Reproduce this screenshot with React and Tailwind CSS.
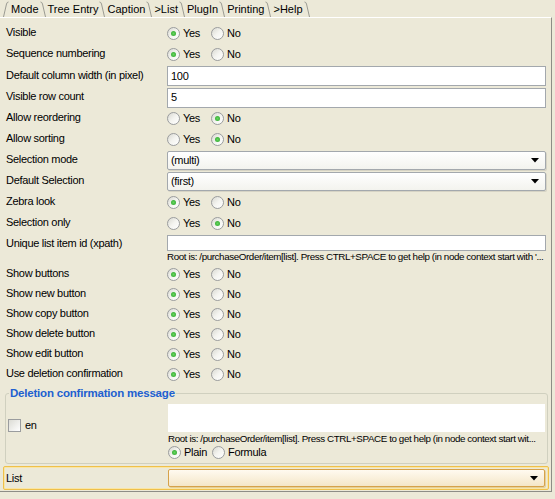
import { Fragment } from "react";

// tab separators, drawn as thin slanted lines
const TabEdge = ({ left }) => (
  <svg width="6" height="16" viewBox="0 0 6 16" className="shrink-0">
    {left ? (
      <path d="M0.5 16 L3.5 3 Q4 1 5.5 1" stroke="#9a9a92" fill="none" />
    ) : (
      <path d="M0.5 1 Q2 1 2.5 3 L5.5 16" stroke="#9a9a92" fill="none" />
    )}
  </svg>
);

const Radio = ({ checked, label }) => (
  <span className="flex items-center gap-[3px]">
    <span className="w-[13px] h-[13px] rounded-full border border-[#9a9c9e] bg-gradient-to-br from-[#d9d9d2] via-[#f4f4f0] to-white flex items-center justify-center">
      {checked && (
        <span className="w-[5px] h-[5px] rounded-full bg-[radial-gradient(circle,#66d65e_0%,#2aa12a_100%)]" />
      )}
    </span>
    <span>{label}</span>
  </span>
);

const YesNo = ({ yes }) => (
  <div className="flex items-center gap-[11px]">
    <Radio checked={yes} label="Yes" />
    <Radio checked={!yes} label="No" />
  </div>
);

const Arrow = () => (
  <svg width="8" height="5" viewBox="0 0 8 5" className="shrink-0">
    <path d="M0 0 H8 L4 4.5 Z" fill="#000" />
  </svg>
);

const Select = ({ value }) => (
  <div className="w-[379px] h-[19px] flex items-center justify-between pl-[3px] pr-[6px] bg-gradient-to-b from-white to-[#f3f3ee] border border-[#a3a8ad] rounded-[2px] shadow-[1px_1px_0_#d6d3c4]">
    <span>{value}</span>
    <Arrow />
  </div>
);

const Row = ({ label, h, children }) => (
  <div className={`flex items-center ${h}`}>
    <div className="w-[167px] pl-[6px] pb-[2px] shrink-0">{label}</div>
    {children}
  </div>
);

const tabs = ["Mode", "Tree Entry", "Caption", ">List", "PlugIn", "Printing", ">Help"];

const radioRows1 = [
  ["Zebra look", true],
  ["Selection only", false],
];

const radioRows2 = [
  ["Show buttons", true],
  ["Show new button", true],
  ["Show copy button", true],
  ["Show delete button", true],
  ["Show edit button", true],
  ["Use deletion confirmation", true],
];

export default function App() {
  return (
    <div className="w-[555px] h-[499px] bg-[#ece9d8] text-black text-[11px] tracking-[-0.3px] font-['Liberation_Sans',Arial,sans-serif] overflow-hidden">
      {/* tab strip */}
      <div className="flex items-end h-[17px] pl-[3px] tracking-normal">
        <TabEdge left />
        {tabs.map((t) => (
          <Fragment key={t}>
            <span className="pl-[2px] pr-[1px] leading-[14px] pb-[1px]">{t}</span>
            <TabEdge />
          </Fragment>
        ))}
      </div>

      {/* panel */}
      <div className="w-[552px] h-[475px] border-t border-t-white border-r border-b border-r-[#8d8d86] border-b-[#8d8d86] pt-[5px]">
        <Row label="Visible" h="h-[21px]">
          <YesNo yes />
        </Row>
        <Row label="Sequence numbering" h="h-[21px]">
          <YesNo yes />
        </Row>
        <Row label="Default column width (in pixel)" h="h-[22px]">
          <div className="w-[379px] h-[20px] bg-white border border-[#a3a8ad] flex items-center pl-[3px]">100</div>
        </Row>
        <Row label="Visible row count" h="h-[21px]">
          <div className="w-[379px] h-[20px] bg-white border border-[#a3a8ad] flex items-center pl-[3px]">5</div>
        </Row>
        <Row label="Allow reordering" h="h-[21px]">
          <YesNo yes={false} />
        </Row>
        <Row label="Allow sorting" h="h-[21px]">
          <YesNo yes={false} />
        </Row>
        <Row label="Selection mode" h="h-[21px]">
          <Select value="(multi)" />
        </Row>
        <Row label="Default Selection" h="h-[21px]">
          <Select value="(first)" />
        </Row>
        {radioRows1.map(([l, y]) => (
          <Row key={l} label={l} h="h-[21px]">
            <YesNo yes={y} />
          </Row>
        ))}

        {/* unique id with hint */}
        <div className="flex h-[30px]">
          <div className="w-[167px] pl-[6px] h-[18px] flex items-center shrink-0">Unique list item id (xpath)</div>
          <div className="w-[379px] pt-[1px]">
            <div className="h-[16px] bg-white border border-[#a3a8ad]" />
            <div className="h-[12px] leading-[12px] text-[9.8px] tracking-[-0.4px] whitespace-nowrap">
              Root is: /purchaseOrder/item[list]. Press CTRL+SPACE to get help (in node context start with '...
            </div>
          </div>
        </div>

        {radioRows2.map(([l, y]) => (
          <Row key={l} label={l} h="h-[20px]">
            <YesNo yes={y} />
          </Row>
        ))}

        {/* deletion confirmation group */}
        <fieldset className="mx-[5px] w-[543px] mt-[2px] border border-[#d0d0bf] rounded-[3px] pb-[3px]">
          <legend className="ml-[3px] px-[1px] text-[11.5px] font-bold text-[#2160d0] tracking-[-0.2px] leading-[14px]">
            Deletion confirmation message
          </legend>
          <div className="flex mt-[4px]">
            <div className="w-[162px] pl-[2px] pt-[13px] shrink-0">
              <label className="flex items-center gap-[4px]">
                <span className="w-[13px] h-[13px] border border-[#9a9c9e] bg-gradient-to-br from-[#dcdcd5] to-white" />
                <span>en</span>
              </label>
            </div>
            <div className="w-[377px]">
              <div className="h-[28px] bg-white" />
              <div className="h-[13px] leading-[13px] text-[9.8px] tracking-[-0.4px] whitespace-nowrap">
                Root is: /purchaseOrder/item[list]. Press CTRL+SPACE to get help (in node context start wit...
              </div>
              <div className="flex items-center gap-[5px] h-[15px]">
                <Radio checked label="Plain" />
                <Radio label="Formula" />
              </div>
            </div>
          </div>
        </fieldset>

        {/* list row, focused */}
        <div className="mx-[3px] mt-[2px] w-[546px] h-[24px] border border-[#efc04a] rounded-[2px] shadow-[inset_0_0_0_1px_#f9e6a6] flex items-start">
          <div className="w-[164px] pl-[2px] pt-[3px] shrink-0">List</div>
          <div className="mt-[2px] w-[377px] h-[18px] flex items-center justify-end pr-[6px] bg-gradient-to-b from-[#fffaf0] to-[#f4e6c8] border border-[#d6a24a] rounded-[2px] shadow-[1px_1px_0_#e3cf9a]">
            <Arrow />
          </div>
        </div>
      </div>
    </div>
  );
}
